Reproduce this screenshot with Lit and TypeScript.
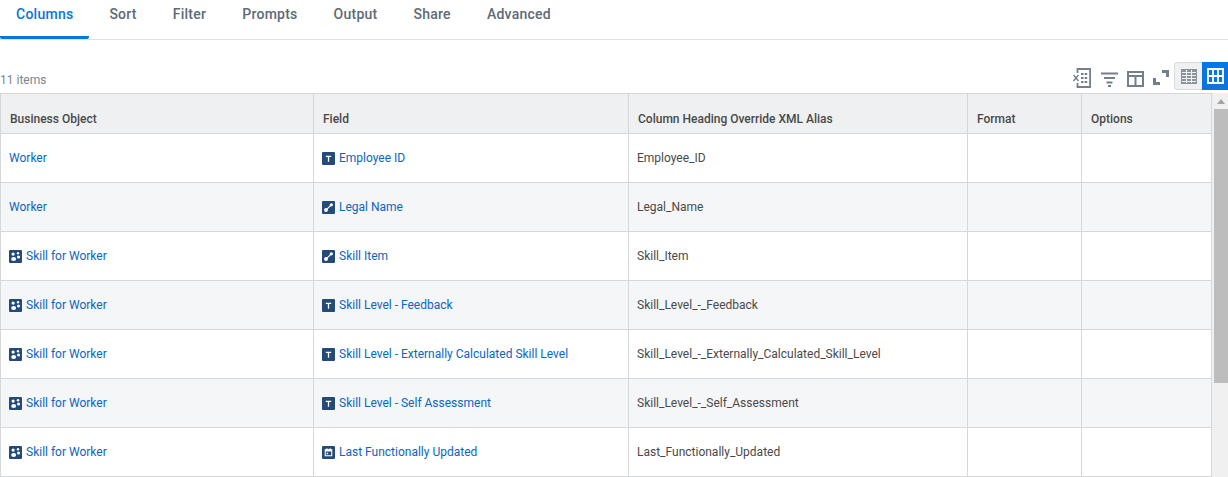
import { LitElement, html, css, svg } from 'lit';
import { customElement } from 'lit/decorators.js';

type Kind = 'text' | 'link' | 'skill' | 'date';

const rows: { bo: string; boIcon: boolean; field: string; kind: Kind; alias: string }[] = [
  { bo: 'Worker', boIcon: false, field: 'Employee ID', kind: 'text', alias: 'Employee_ID' },
  { bo: 'Worker', boIcon: false, field: 'Legal Name', kind: 'link', alias: 'Legal_Name' },
  { bo: 'Skill for Worker', boIcon: true, field: 'Skill Item', kind: 'link', alias: 'Skill_Item' },
  { bo: 'Skill for Worker', boIcon: true, field: 'Skill Level - Feedback', kind: 'text', alias: 'Skill_Level_-_Feedback' },
  { bo: 'Skill for Worker', boIcon: true, field: 'Skill Level - Externally Calculated Skill Level', kind: 'text', alias: 'Skill_Level_-_Externally_Calculated_Skill_Level' },
  { bo: 'Skill for Worker', boIcon: true, field: 'Skill Level - Self Assessment', kind: 'text', alias: 'Skill_Level_-_Self_Assessment' },
  { bo: 'Skill for Worker', boIcon: true, field: 'Last Functionally Updated', kind: 'date', alias: 'Last_Functionally_Updated' },
];

const tabs = ['Columns', 'Sort', 'Filter', 'Prompts', 'Output', 'Share', 'Advanced'];
const heads = ['Business Object', 'Field', 'Column Heading Override XML Alias', 'Format', 'Options'];

const glyphs = {
  text: svg`<path d="M3.500 3.500h5v1.200H6.600V9H5.400V4.700H3.500z" fill="#fff"/>`,
  link: svg`<path d="M3.800 8.200 8.200 4" stroke="#fff" stroke-width="1" fill="none"/><circle cx="3.700" cy="8.300" r="1.800" fill="#fff"/><circle cx="8.600" cy="3.500" r="1.500" fill="#fff"/>`,
  skill: svg`<circle cx="3.800" cy="3.800" r="1.500" fill="#fff"/><circle cx="8.300" cy="3" r="1.100" fill="#fff"/><ellipse cx="4.300" cy="8.300" rx="2.300" ry="1.800" fill="#fff"/><circle cx="8.800" cy="6.400" r="1.400" fill="#fff"/>`,
  date: svg`<path d="M3 3.500h6v5.500H3z" stroke="#fff" stroke-width="1" fill="none"/><path d="M3 3h6v2H3zM4 2h1v1H4zM7 2h1v1H7zM4.300 6.300h1.400v1.400H4.300z" fill="#fff"/>`,
};

@customElement('app-root')
export class AppRoot extends LitElement {
  static styles = css`
    :host {
      display: block;
      height: 477px;
      overflow: hidden;
      background: #fff;
      font-family: Roboto, "Liberation Sans", sans-serif;
      font-size: 12px;
      color: #494949;
    }
    .tabs {
      display: flex;
      gap: 4px;
      height: 39px;
      border-bottom: 1px solid #e0e1e3;
    }
    .tab {
      padding: 0 16px;
      height: 39px;
      box-sizing: border-box;
      font-size: 14px;
      font-weight: 500;
      letter-spacing: 0.25px;
      line-height: 29px;
      color: #5e6a75;
    }
    .tab.active {
      color: #0875e1;
      border-bottom: 3px solid #0875e1;
      border-radius: 0 0 2px 2px;
    }
    .toolbar {
      display: flex;
      align-items: center;
      height: 53px;
      box-sizing: border-box;
      padding-top: 22px;
      color: #7b858f;
    }
    .count {
      flex: 1;
      padding-top: 4px;
    }
    .tools {
      display: flex;
      align-items: center;
    }
    .tools svg {
      display: block;
    }
    .switch {
      display: flex;
      height: 28px;
      margin-bottom: 3px;
    }
    .switch div {
      display: flex;
      align-items: center;
      justify-content: center;
    }
    .switch .off {
      background: #eef0f2;
      border: 1px solid #d9dcdf;
      border-right: none;
      border-radius: 4px 0 0 4px;
      width: 28px;
      box-sizing: border-box;
    }
    .switch .on {
      width: 26px;
      background: #0875e1;
    }
    .body {
      display: flex;
    }
    .grid {
      width: 1212px;
      box-sizing: border-box;
      border: 1px solid #d6d7d9;
      border-bottom: none;
      display: grid;
      grid-template-columns: 313px 315px 339px 114px 129px;
      grid-template-rows: 40px;
      grid-auto-rows: 49px;
    }
    .cell {
      display: flex;
      align-items: center;
      box-sizing: border-box;
      padding: 0 8px;
      border-right: 1px solid #d6d7d9;
      border-bottom: 1px solid #d6d7d9;
      white-space: nowrap;
      font-size: 12px;
      color: #494949;
    }
    .cell:nth-child(5n) {
      border-right: none;
    }
    .cell.head {
      background: #eff0f2;
      font-weight: 500;
      padding: 10px 9px 0;
    }
    .cell.alt {
      background: #f5f6f8;
    }
    .link {
      color: #0b65c2;
    }
    .badge {
      width: 13px;
      height: 13px;
      margin-right: 4px;
      flex: none;
      display: block;
    }
    .scrollbar {
      width: 16px;
      background: #f0f0f0;
      display: flex;
      flex-direction: column;
      align-items: center;
    }
    .arrow {
      width: 0;
      height: 0;
      margin-top: 6px;
      margin-left: 1px;
      border-left: 4px solid transparent;
      border-right: 4px solid transparent;
      border-bottom: 5px solid #a3a3a3;
    }
    .thumb {
      width: 14px;
      height: 274px;
      margin-top: 5px;
      margin-left: 2px;
      background: #bdbdbd;
    }
    .gap-10 { margin-right: 10px; }
    .gap-9 { margin-right: 9px; }
    .gap-5 { margin-right: 5px; }
    .low { margin-top: 3px; }
  `;

  badge(kind: Kind) {
    return html`<svg class="badge" viewBox="0 0 12 12">
      <rect width="12" height="12" rx="1" fill="#244a78"></rect>${glyphs[kind]}
    </svg>`;
  }

  tools() {
    const s = '#757f89';
    return html`<div class="tools">
      <svg class="gap-10" width="18" height="20" viewBox="0 0 18 20" fill="none" stroke=${s} stroke-width="1.800">
        <path d="M4.500 5V1h12.600v18H4.500V15"></path>
        <path d="M8 6h6.500M8 10h6.500M8 14h6.500" stroke-dasharray="2.500 1.200" stroke-width="2"></path>
        <path d="M.5 7l5 6M5.500 7l-5 6" stroke-width="1.400"></path>
      </svg>
      <svg class="gap-9 low" width="17" height="16" viewBox="0 0 17 16" fill=${s}>
        <path d="M0 1.500h17v2H0zM3 6h11v2H3zM5.500 10.500h6v2h-6zM7 14h3v2H7z"></path>
      </svg>
      <svg class="gap-9 low" width="17" height="16" viewBox="0 0 17 16" fill="none" stroke=${s} stroke-width="2">
        <path d="M1 1h15v14H1zM1 5h15M8.500 5v10"></path>
      </svg>
      <svg class="gap-5" width="16" height="15" viewBox="0 0 16 15" fill="none" stroke=${s} stroke-width="3">
        <path d="M1.500 8v5.500H7M9 1.500h5.500V7"></path>
      </svg>
      <div class="switch">
        <div class="off">
          <svg width="16" height="15" viewBox="0 0 16 15">
            <path d="M0 0h16v15H0z" fill="#8b949c"></path>
            <path d="M1 3.500h14M1 6.500h14M1 9.500h14M1 12.500h14M5.500 1v13M10.500 1v13" stroke="#eef0f2" stroke-width="1"></path>
          </svg>
        </div>
        <div class="on">
          <svg width="17" height="16" viewBox="0 0 17 16" fill="none" stroke="#fff" stroke-width="1.800">
            <path d="M1 1h15v14H1zM1 8h15M6 1v14M11 1v14"></path>
          </svg>
        </div>
      </div>
    </div>`;
  }

  render() {
    return html`
      <div class="tabs">
        ${tabs.map((t, i) => html`<div class="tab ${i === 0 ? 'active' : ''}">${t}</div>`)}
      </div>
      <div class="toolbar">
        <div class="count">11 items</div>
        ${this.tools()}
      </div>
      <div class="body">
        <div class="grid">
          ${heads.map((h) => html`<div class="cell head">${h}</div>`)}
          ${rows.map((r, i) => {
            const alt = i % 2 === 1 ? 'alt' : '';
            return html`
              <div class="cell ${alt}">
                ${r.boIcon ? this.badge('skill') : ''}<span class="link">${r.bo}</span>
              </div>
              <div class="cell ${alt}">${this.badge(r.kind)}<span class="link">${r.field}</span></div>
              <div class="cell ${alt}">${r.alias}</div>
              <div class="cell ${alt}"></div>
              <div class="cell ${alt}"></div>
            `;
          })}
        </div>
        <div class="scrollbar">
          <div class="arrow"></div>
          <div class="thumb"></div>
        </div>
      </div>
    `;
  }
}
